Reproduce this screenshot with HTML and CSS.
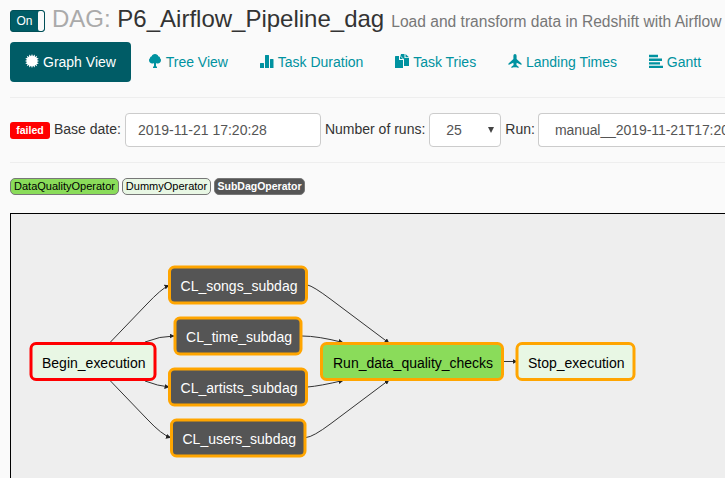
FILE: index.html
```html
<!DOCTYPE html>
<html lang="en">
<head>
<meta charset="utf-8">
<title>P6_Airflow_Pipeline_dag</title>
<link rel="stylesheet" href="styles.css">
</head>
<body>
<header class="title">
  <span class="toggle"><span class="toggle-label">On</span><span class="toggle-knob"></span></span>
  <h3><span class="muted">DAG:</span> P6_Airflow_Pipeline_dag</h3>
  <small>Load and transform data in Redshift with Airflow</small>
</header>
<nav class="tabs">
  <a class="tab active"><svg class="icon" viewBox="0 0 14 14"><path d="M7 0L8 2.300 9.700.4 10 2.900 12.200 1.800 11.500 4.100 13.700 4.300 12 6 14 7 12 8 13.700 9.700 11.500 9.900 12.200 12.200 10 11.100 9.700 13.600 8 11.700 7 14 6 11.700 4.300 13.600 4 11.100 1.800 12.200 2.500 9.900.3 9.700 2 8 0 7 2 6 .3 4.300 2.500 4.100 1.800 1.800 4 2.900 4.300.4 6 2.300z"/></svg>Graph View</a>
  <a class="tab"><svg class="icon" viewBox="0 0 14 14"><path d="M7 0c1.700 0 3 1 3.200 2.200C11.500 2.400 12.200 3.300 12 4.200c.7.400 1 1 1 1.800C13 8 11.600 9.500 9.800 9.500c-.7 0-1.300-.2-1.800-.6V12l1 1v1H5v-1l1-1V8.900c-.5.400-1.100.6-1.800.6C2.400 9.500 1 8 1 6c0-.8.300-1.400 1-1.800 0-1 .7-1.800 1.800-2C4 1 5.300 0 7 0z"/></svg>Tree View</a>
  <a class="tab"><svg class="icon" viewBox="0 0 14 14"><path d="M.5 9h3q.5 0 .5.500V14H0V9.500Q0 9 .5 9zM5.500 1h3q.5 0 .5.500V14H5V1.500Q5 1 5.500 1zM10.500 5h2.500q.5 0 .5.500V14H10V5.500q0-.5.500-.5z"/></svg>Task Duration</a>
  <a class="tab"><svg class="icon" viewBox="0 0 14 14"><path d="M.5 2H4v4h4v8H0V2.500zM5 2l3 3H5zM6 0h3.500v4H14v8H9V5.200L5.500 1.700zM10.500 0L14 3.200h-3.500z"/></svg>Task Tries</a>
  <a class="tab"><svg class="icon" viewBox="0 0 14 14"><path d="M7 0c.9 0 1.600.9 1.600 2v3L13.500 9.500V11L8.700 8.800 8.400 11l2.200 1.700V14L7.500 13 7 14l-.5-1-3.100 1v-1.300L5.600 11l-.3-2.200L.5 11V9.500L5.400 5V2c0-1.100.7-2 1.600-2z"/></svg>Landing Times</a>
  <a class="tab"><svg class="icon" viewBox="0 0 14 14"><path d="M0 .8h9v2.400H0zM0 4.500h13v2.400H0zM0 8.200h11v2.400H0zM0 11.700h14v2.300H0z"/></svg>Gantt</a>
</nav>
<form class="filters">
  <span class="failed">failed</span>
  <label>Base date:</label>
  <span class="control date">2019-11-21 17:20:28</span>
  <label>Number of runs:</label>
  <span class="control runs">25<svg class="caret" viewBox="0 0 6 6"><path d="M0 0h6L3 6z"/></svg></span>
  <label>Run:</label>
  <span class="control run">manual__2019-11-21T17:20:28</span>
</form>
<div class="legend">
  <span class="op quality">DataQualityOperator</span>
  <span class="op dummy">DummyOperator</span>
  <span class="op subdag">SubDagOperator</span>
</div>
<main class="graph">
<svg width="714" height="264" viewBox="11 214 714 264">
  <defs><marker id="arrow" viewBox="0 0 10 10" refX="9" refY="5" markerWidth="5" markerHeight="5" markerUnits="userSpaceOnUse" orient="auto"><path d="M0 0L10 5 0 10z"/></marker></defs>
  <g class="edges">
    <path d="M110.500 342L146 305Q162 288 169 285.500"/>
    <path d="M145 342Q160 336 174 336"/>
    <path d="M145 381Q158 386 169 387"/>
    <path d="M110.500 381L147 419Q162 435 170.500 437.500"/>
    <path d="M307.500 285Q313 286 331 299.500L389 343"/>
    <path d="M302 336Q318 336 343 342.500"/>
    <path d="M307.500 387Q320 386 343 380.500"/>
    <path d="M306 437.500Q313 437 331 423.500L389 380"/>
    <path d="M503 361.500H517"/>
  </g>
  <g class="node failed-node dummy-node"><rect x="31" y="343.500" width="124" height="36" rx="5"/><text x="42" y="368" textLength="103.500">Begin_execution</text></g>
  <g class="node subdag-node"><rect x="169.500" y="267" width="137" height="36" rx="5"/><text x="180.500" y="291" textLength="117">CL_songs_subdag</text></g>
  <g class="node subdag-node"><rect x="175" y="318" width="126" height="36" rx="5"/><text x="186" y="342" textLength="106">CL_time_subdag</text></g>
  <g class="node subdag-node"><rect x="169.500" y="369" width="137" height="36" rx="5"/><text x="180.500" y="393" textLength="117">CL_artists_subdag</text></g>
  <g class="node subdag-node"><rect x="171.500" y="420" width="133.500" height="36" rx="5"/><text x="182.500" y="444" textLength="113.500">CL_users_subdag</text></g>
  <g class="node quality-node"><rect x="321.500" y="343.500" width="181" height="36" rx="5"/><text x="333" y="368" textLength="160">Run_data_quality_checks</text></g>
  <g class="node dummy-node"><rect x="517" y="343.500" width="117" height="36" rx="5"/><text x="528" y="368" textLength="96.500">Stop_execution</text></g>
</svg>
</main>
</body>
</html>
```

FILE: styles.css
```css
* { box-sizing: border-box; }
body {
  margin: 0;
  padding: 0 0 0 10px;
  height: 478px;
  overflow: hidden;
  background: #fafafa;
  color: #333;
  font: 14px/20px "Liberation Sans", Arial, sans-serif;
  white-space: nowrap;
}
.title { display: flex; align-items: baseline; height: 42px; padding-top: 6px; }
.toggle {
  display: flex;
  align-self: flex-start;
  width: 35px;
  height: 22px;
  margin: 4px 7px 0 0;
  border: 1px solid #004f57;
  border-radius: 3px;
  background: #005c66;
  color: #fff;
  font-size: 12px;
  overflow: hidden;
}
.toggle-label { width: 27px; text-align: center; line-height: 20px; }
.toggle-knob { flex: 1; border-radius: 2px; background: #fafafa; }
h3 { margin: 0 7px 0 0; font-weight: 400; font-size: 24px; line-height: 26px; }
.muted { color: #aaa; }
small { color: #777; font-size: 15.6px; }
.tabs { display: flex; gap: 1.8px; height: 55px; }
.tab {
  display: flex;
  gap: 4px;
  height: 40px;
  padding: 10px 15px;
  border-radius: 4px;
  color: #0092a0;
}
.active { background: #005c66; color: #fff; }
.icon { width: 14px; height: 14px; margin-top: 2px; fill: currentColor; }
.filters {
  display: flex;
  align-items: center;
  gap: 4px;
  height: 66px;
  border: solid #eee;
  border-width: 1px 0;
}
.failed {
  flex: none;
  width: 40px;
  height: 17px;
  margin-top: 1px;
  border-radius: 3px;
  background: red;
  color: #fff;
  font: bold 10.5px/17px "Liberation Sans", Arial, sans-serif;
  text-align: center;
}
label { flex: none; margin-top: -2px; }
.control {
  flex: none;
  height: 34px;
  padding: 6px 12px;
  border: 1px solid #ccc;
  border-radius: 4px;
  background: #fff;
  color: #555;
}
.date { width: 196px; }
.runs { display: flex; justify-content: space-between; width: 72px; padding: 6px 6px 6px 16px; }
.caret { width: 6px; height: 6px; margin-top: 7px; fill: #444; }
.run { flex: 1 0 0; margin-left: -1px; padding-left: 16px; padding-right: 0; border-right: 0; border-radius: 4px 0 0 4px; letter-spacing: -.07px; overflow: hidden; }
.legend { display: flex; gap: 3px; height: 50px; padding-top: 15px; }
.op {
  height: 17px;
  border: 1px solid #777;
  border-radius: 5px;
  color: #000;
  font-size: 11px;
  line-height: 15px;
  text-align: center;
}
.quality { width: 109px; background: #8adc5a; }
.dummy { width: 89px; background: #e8f7e4; }
.subdag { width: 91px; background: #555; color: #fff; font-size: 10.500px; font-weight: bold; }
.graph { height: 265px; border: solid #000; border-width: 1px 0 0 1px; background: #eee; }
.graph svg { display: block; }
.edges path { fill: none; stroke: #333; stroke-width: 1; marker-end: url(#arrow); }
marker path { fill: #222; stroke: none; marker-end: none; }
.node rect { stroke: orange; stroke-width: 3; }
.node text { font-size: 14px; }
.failed-node rect { stroke: red; }
.dummy-node rect { fill: #e8f7e4; }
.subdag-node rect { fill: #555; }
.subdag-node text { fill: #fff; }
.quality-node rect { fill: #8adc5a; }
```
